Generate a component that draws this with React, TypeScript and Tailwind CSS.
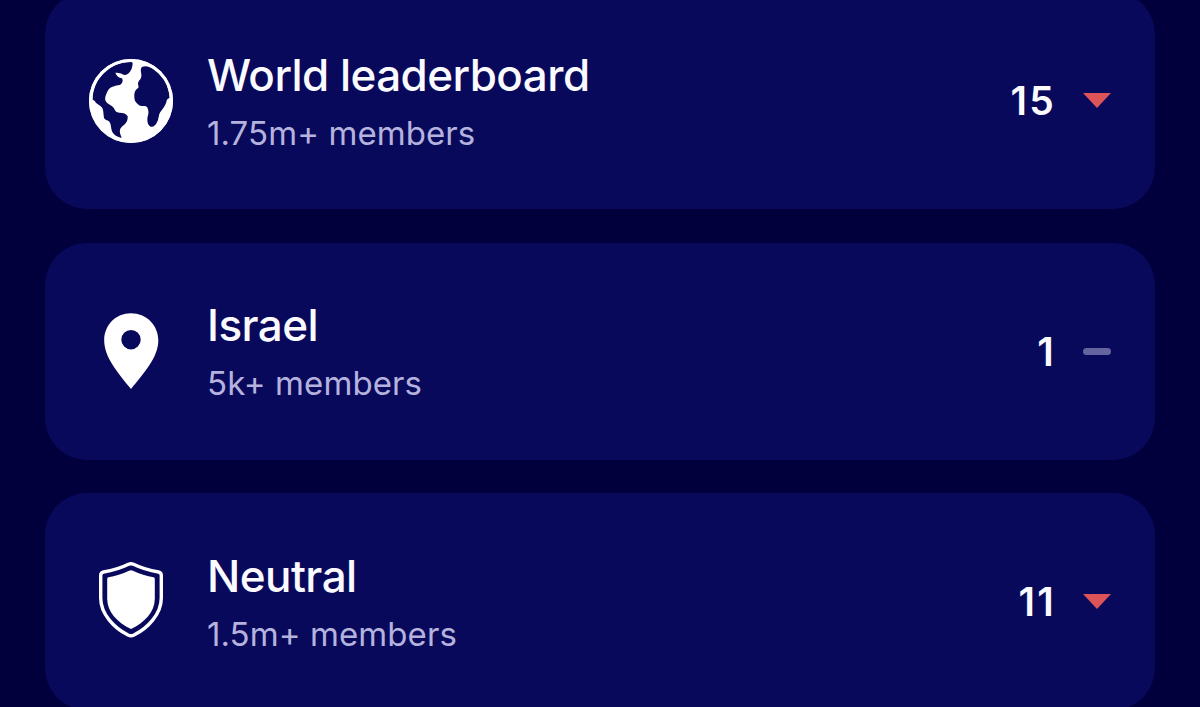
import React from 'react';

type Trend = 'down' | 'same';

function GlobeIcon() {
  return (
    <svg viewBox="6 7 258 258" className="w-[86px] h-[86px]">
      <circle cx="135" cy="136" r="126" fill="#ffffff" />
      <path
        fill="#09095c"
        d="M20 132C20 76 63 24 125 19C132 18 139 18 140 23C140 34 135 47 128 53C121 59 114 59 107 54C101 51 94 51 88 51C91 60 98 66 108 68C112 75 110 82 103 87C86 90 70 94 65 106C60 117 55 127 59 136C65 147 78 148 84 158C87 166 91 171 100 171C112 171 121 174 125 182C126 195 120 205 110 211C103 216 100 224 102 232C103 238 106 241 107 247C94 244 83 238 79 229C74 217 76 205 70 198C64 192 56 193 54 186C52 176 53 166 49 157C43 148 35 147 30 141C27 136 24 133 20 132Z"
      />
      <path
        fill="#09095c"
        d="M168 34C178 29 190 33 202 40C232 57 249 91 251 127C245 128 242 132 241 140C237 152 230 161 223 169C217 177 219 190 213 200C208 210 202 215 194 213C186 210 184 201 184 190C184 181 189 175 187 166C186 158 184 153 178 151C169 152 160 151 155 145C148 140 145 133 145 124C144 112 147 104 153 99C157 97 159 95 157 90C154 82 158 76 163 71C168 63 166 57 165 50C164 44 164 38 168 34Z"
      />
      <circle cx="135" cy="136" r="121.500" fill="none" stroke="#ffffff" strokeWidth="9" />
    </svg>
  );
}

function PinIcon() {
  return (
    <svg viewBox="-1 1.5 84 100" className="w-[84px] h-[100px]">
      <path
        fill="#ffffff"
        fillRule="evenodd"
        d="M41 13.8C25.800 13.800 14.200 25.600 14.200 41C14.200 58 28.500 74 41 89.500C53.500 74 68.300 58 68.300 41C68.300 25.600 56.200 13.800 41 13.800ZM41 30.500A9.700 9.700 0 1 1 41 49.900A9.700 9.700 0 1 1 41 30.500Z"
      />
    </svg>
  );
}

function ShieldIcon() {
  return (
    <svg viewBox="-1 2 84 100" className="w-[84px] h-[100px]">
      <path
        fill="none"
        stroke="#ffffff"
        strokeWidth="3.4"
        strokeLinejoin="round"
        d="M38.500 14.300Q41 13.200 43.500 14.300C51 18 60 20.600 68.500 22Q71.300 22.600 71.300 25.500V48C71.300 64 58 78 44 85Q41 86.500 38 85C24 78 10.700 64 10.700 48V25.500Q10.700 22.600 13.500 22C22 20.600 31 18 38.500 14.300Z"
      />
      <path
        fill="#ffffff"
        d="M39 20.700Q41 19.800 43 20.700C49.500 24 57 26.200 63.500 27.200Q64.800 27.500 64.800 29V49C64.800 62 54.500 72.500 41 79C27.500 72.500 17.200 62 17.200 49V29Q17.200 27.500 18.500 27.200C25 26.200 32.500 24 39 20.700Z"
      />
    </svg>
  );
}

function TrendMark({ trend }: { trend: Trend }) {
  if (trend === 'same') {
    return <span className="w-7 h-[7px] rounded-full bg-[#66649f]" />;
  }
  return (
    <svg viewBox="0 0 28 15" className="w-7 h-[15px]">
      <path d="M0 0H28L14 15Z" fill="#dc5358" />
    </svg>
  );
}

const leaderboards: { id: string; name: string; members: string; rank: number; trend: Trend; icon: () => React.ReactElement }[] = [
  { id: 'world', name: 'World leaderboard', members: '1.75m+ members', rank: 15, trend: 'down', icon: GlobeIcon },
  { id: 'country', name: 'Israel', members: '5k+ members', rank: 1, trend: 'same', icon: PinIcon },
  { id: 'team', name: 'Neutral', members: '1.5m+ members', rank: 11, trend: 'down', icon: ShieldIcon },
];

export default function App() {
  return (
    <div className="h-[707px] overflow-hidden bg-[#01003d] px-[45px] font-[Inter,sans-serif]">
      {/* The list is scrolled slightly past the top of the first card */}
      <div className="-mt-2 flex flex-col gap-[33.500px]">
        {leaderboards.map((board) => (
          <div
            key={board.id}
            className="flex h-[217px] shrink-0 items-center rounded-[42px] bg-[#09095c] pl-[43px] pr-11"
          >
            <div className="flex w-[86px] shrink-0 items-center justify-center">
              <board.icon />
            </div>
            <div className="ml-[33px] flex-1">
              <div className="text-[44px] leading-[52px] font-medium tracking-[-0.55px] text-[#fbfaff]">
                {board.name}
              </div>
              <div className="mt-3 text-[33px] leading-10 tracking-[0.08px] text-[#b5b3de]">
                {board.members}
              </div>
            </div>
            <div className="flex items-center gap-[27px]">
              <span className="text-[39px] leading-none font-semibold tracking-[2.2px] text-[#fbfaff]">{board.rank}</span>
              <TrendMark trend={board.trend} />
            </div>
          </div>
        ))}
      </div>
    </div>
  );
}
